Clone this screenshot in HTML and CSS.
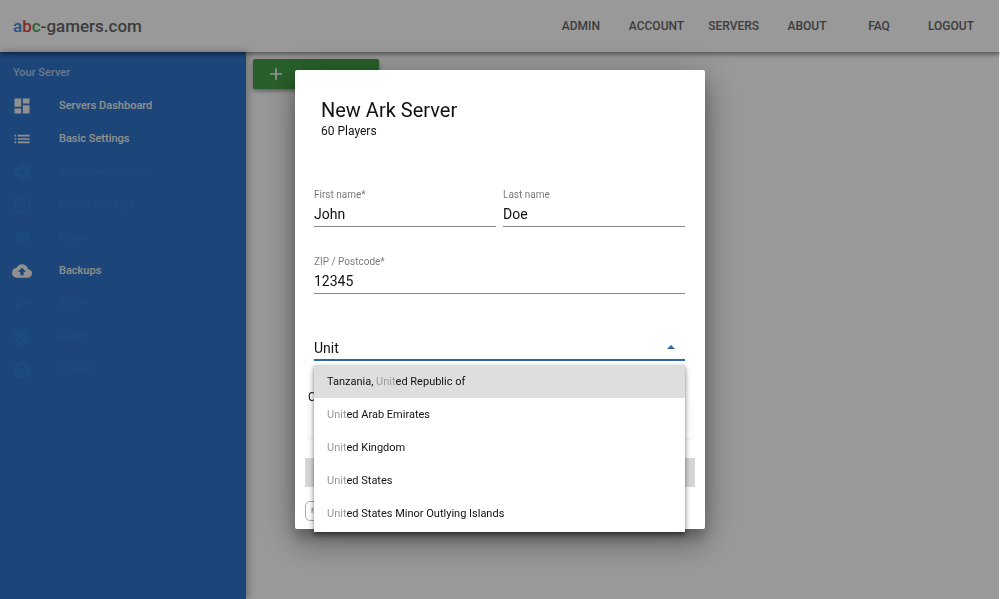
FILE: index.html
```html
<!DOCTYPE html>
<html lang="en">
<head>
    <meta charset="UTF-8">
    <meta name="viewport" content="width=device-width, initial-scale=1.0">
    <title>abc-gamers.com</title>
    <link rel="stylesheet" href="styles.css">
</head>
<body>
    <header class="toolbar">
        <a class="brand" href="#"><span class="blue">a</span><span class="red">b</span><span class="green">c</span>-gamers.com</a>
        <nav class="top-nav">
            <a href="#">ADMIN</a>
            <a href="#">ACCOUNT</a>
            <a href="#">SERVERS</a>
            <a href="#">ABOUT</a>
            <a href="#">FAQ</a>
            <a href="#">LOGOUT</a>
        </nav>
    </header>
    <div class="layout">
        <aside class="sidebar">
            <h2>Your Server</h2>
            <nav class="side-nav">
                <a href="#">
                    <svg viewBox="0 0 24 24"><path d="M3 13h8V3H3v10zm0 8h8v-6H3v6zm10 0h8V11h-8v10zm0-18v6h8V3h-8z"/></svg>
                    Servers Dashboard
                </a>
                <a href="#">
                    <svg viewBox="0 0 24 24"><path d="M3 13h2v-2H3v2zm0 4h2v-2H3v2zm0-8h2V7H3v2zm4 4h14v-2H7v2zm0 4h14v-2H7v2zM7 7v2h14V7H7z"/></svg>
                    Basic Settings
                </a>
                <a href="#" class="disabled">
                    <svg viewBox="0 0 24 24"><path d="M19.43 12.98c.04-.32.07-.64.07-.98s-.03-.66-.07-.98l2.11-1.65c.19-.15.24-.42.12-.64l-2-3.46c-.12-.22-.39-.3-.61-.22l-2.49 1c-.52-.4-1.08-.73-1.69-.98l-.38-2.65C14.46 2.18 14.25 2 14 2h-4c-.25 0-.46.18-.49.42l-.38 2.65c-.61.25-1.17.59-1.69.98l-2.49-1c-.23-.09-.49 0-.61.22l-2 3.46c-.13.22-.07.49.12.64l2.11 1.65c-.04.32-.07.65-.07.98s.03.66.07.98l-2.11 1.65c-.19.15-.24.42-.12.64l2 3.46c.12.22.39.3.61.22l2.49-1c.52.4 1.08.73 1.69.98l.38 2.65c.03.24.24.42.49.42h4c.25 0 .46-.18.49-.42l.38-2.65c.61-.25 1.17-.59 1.69-.98l2.49 1c.23.09.49 0 .61-.22l2-3.46c.12-.22.07-.49-.12-.64l-2.11-1.65zM12 15.5c-1.93 0-3.5-1.57-3.5-3.5s1.57-3.5 3.5-3.5 3.5 1.57 3.5 3.5-1.57 3.5-3.5 3.5z"/></svg>
                    Advanced Settings
                </a>
                <a href="#" class="disabled">
                    <svg viewBox="0 0 24 24"><path d="M3 5v4h2V5h4V3H5c-1.1 0-2 .9-2 2zm2 10H3v4c0 1.1.9 2 2 2h4v-2H5v-4zm14 4h-4v2h4c1.1 0 2-.9 2-2v-4h-2v4zm0-16h-4v2h4v4h2V5c0-1.1-.9-2-2-2zM3 9h2v6H3zm16 0h2v6h-2zM9 3h6v2H9zm0 16h6v2H9zM8 8h2v2H8zm6 0h2v2h-2zm-6 6h2v2H8zm6 0h2v2h-2zm-3-3h2v2h-2z"/></svg>
                    Expert Settings
                </a>
                <a href="#" class="disabled">
                    <svg viewBox="0 0 24 24"><path d="M4 5h5v4H4zm6 0h5v4h-5zm6 0h5v4h-5zM4 10h5v4H4zm6 0h5v4h-5zm6 0h5v4h-5zM4 15h5v4H4zm6 0h5v4h-5zm6 0h5v4h-5z"/></svg>
                    Mods
                </a>
                <a href="#">
                    <svg viewBox="0 0 24 24"><path d="M19.35 10.04C18.67 6.59 15.64 4 12 4 9.11 4 6.6 5.64 5.35 8.04 2.34 8.36 0 10.91 0 14c0 3.31 2.69 6 6 6h13c2.76 0 5-2.24 5-5 0-2.64-2.05-4.78-4.65-4.96zM14 13v4h-4v-4H7l5-5 5 5h-3z"/></svg>
                    Backups
                </a>
                <a href="#" class="disabled">
                    <svg viewBox="0 0 24 24"><path d="M6.99 11L3 15l3.99 4v-3H14v-2H6.99v-3zM21 9l-3.99-4v3H10v2h7.01v3L21 9z"/></svg>
                    SFTP
                </a>
                <a href="#" class="disabled">
                    <svg viewBox="0 0 24 24"><path d="M12 1L3 5v6c0 5.55 3.84 10.74 9 12 5.16-1.26 9-6.45 9-12V5l-9-4zm-2 16l-4-4 1.41-1.41L10 14.17l6.59-6.59L18 9l-8 8z"/></svg>
                    RCON
                </a>
                <a href="#" class="disabled">
                    <svg viewBox="0 0 24 24"><path fill-rule="evenodd" d="M12 2a10 10 0 1 0 0 20 10 10 0 0 0 0-20zm0 3.500a2.750 2.750 0 1 1 0 5.500 2.750 2.750 0 0 1 0-5.500zM8 12.500a2.750 2.750 0 1 1 0 5.500 2.750 2.750 0 0 1 0-5.500zm8 0a2.750 2.750 0 1 1 0 5.500 2.750 2.750 0 0 1 0-5.500z"/></svg>
                    Cluster
                </a>
            </nav>
        </aside>
        <main class="content">
            <button type="button" class="add-button">
                <svg viewBox="0 0 24 24"><path d="M19 13h-6v6h-2v-6H5v-2h6V5h2v6h6v2z"/></svg>
                ADD SERVER
            </button>
        </main>
    </div>

    <div class="backdrop"></div>
    <div class="dialog-wrap">
        <form class="dialog" role="dialog" aria-labelledby="dialog-title">
            <div class="dialog-header">
                <h1 id="dialog-title">New Ark Server</h1>
                <p>60 Players</p>
            </div>
            <div class="fields">
                <div class="field-row">
                    <div class="field">
                        <label for="first">First name*</label>
                        <input type="text" id="first" value="John">
                    </div>
                    <div class="field">
                        <label for="last">Last name</label>
                        <input type="text" id="last" value="Doe">
                    </div>
                </div>
                <div class="field">
                    <label for="zip">ZIP / Postcode*</label>
                    <input type="text" id="zip" value="12345">
                </div>
                <div class="field country">
                    <input type="text" id="country" value="Unit" role="combobox" aria-label="Country" aria-expanded="true" aria-controls="countries">
                    <span class="arrow"></span>
                    <ul class="options" id="countries" role="listbox">
                        <li role="option" aria-selected="true">Tanzania, <span>Unit</span>ed Republic of</li>
                        <li role="option"><span>Unit</span>ed Arab Emirates</li>
                        <li role="option"><span>Unit</span>ed Kingdom</li>
                        <li role="option"><span>Unit</span>ed States</li>
                        <li role="option"><span>Unit</span>ed States Minor Outlying Islands</li>
                    </ul>
                </div>
            </div>
            <div class="payment">
                <label for="card">C</label>
                <input type="text" id="card">
            </div>
            <button type="submit" class="submit" aria-label="Submit" disabled></button>
            <span class="badge">P</span>
        </form>
    </div>
</body>
</html>
```
FILE: styles.css
```css
* {
    box-sizing: border-box;
}
body {
    display: flex;
    flex-direction: column;
    min-height: 100vh;
    margin: 0;
    background-color: #fff;
    color: #111;
    font-family: Roboto, sans-serif;
    font-size: 11px;
}
a {
    color: inherit;
    text-decoration: none;
}
input,
button {
    font-family: inherit;
}

/* top bar */
.toolbar {
    display: flex;
    align-items: center;
    justify-content: space-between;
    height: 52px;
    padding: 0 13px;
    color: #666;
    font-weight: 500;
    box-shadow: 0 2px 5px rgba(0, 0, 0, 0.5);
    z-index: 1;
}
.brand {
    font-size: 17px;
}
.brand .blue {
    color: #3c8fdc;
}
.brand .red {
    color: #e0483e;
}
.brand .green {
    color: #4ca650;
}
.top-nav {
    display: flex;
    font-size: 12px;
}
.top-nav a {
    min-width: 72px;
    padding: 0 12px;
    text-align: center;
}

/* side bar */
.layout {
    display: flex;
    flex: 1;
}
.sidebar {
    width: 246px;
    background-color: #3075ca;
    color: #f0f0f0;
    font-weight: 500;
    box-shadow: 2px 0 8px rgba(0, 0, 0, 0.3);
}
.sidebar h2 {
    margin: 0;
    padding: 5px 13px 0;
    color: #b3cbea;
    font-size: 11px;
    font-weight: 500;
    line-height: 32px;
}
.side-nav a {
    display: flex;
    align-items: center;
    gap: 27px;
    height: 33px;
    padding: 0 12px;
}
.side-nav .disabled {
    color: #307fd2;
}
.side-nav svg {
    width: 20px;
    height: 20px;
    fill: currentColor;
}

/* page */
.content {
    flex: 1;
    padding: 7px;
}
.add-button {
    display: flex;
    align-items: center;
    gap: 10px;
    height: 30px;
    padding: 0 19px 0 13px;
    border: none;
    border-radius: 2px;
    background-color: #43a047;
    color: #fff;
    font-size: 11px;
    font-weight: 500;
    box-shadow: 0 2px 4px rgba(0, 0, 0, 0.4);
}
.add-button svg {
    width: 20px;
    height: 20px;
    fill: currentColor;
}

/* dialog */
.backdrop {
    position: fixed;
    inset: 0 1px 0 0;
    background-color: rgba(0, 0, 0, 0.4);
    z-index: 2;
}
.dialog-wrap {
    display: flex;
    align-items: center;
    justify-content: center;
    position: fixed;
    inset: 0;
    z-index: 3;
}
.dialog {
    width: 410px;
    padding: 27px 10px 8px;
    border-radius: 2px;
    background-color: #fff;
    box-shadow: 0 9px 12px rgba(0, 0, 0, 0.2), 0 19px 31px rgba(0, 0, 0, 0.14), 0 7px 38px rgba(0, 0, 0, 0.3);
}
.dialog-header {
    margin-bottom: 49px;
    padding: 0 16px;
}
.dialog-header h1 {
    margin: 0;
    font-size: 20px;
    font-weight: 400;
    line-height: 26px;
}
.dialog-header p {
    margin: 0;
    font-size: 12px;
    line-height: 16px;
}
.fields {
    padding: 0 10px 0 9px;
}
.field-row {
    display: flex;
    gap: 7px;
}
.field {
    flex: 1;
    margin-bottom: 28px;
}
.field label {
    display: block;
    color: rgba(0, 0, 0, 0.54);
    font-size: 10px;
    line-height: 14px;
}
.field input {
    display: block;
    width: 100%;
    height: 25px;
    padding: 0;
    border: none;
    border-bottom: 1px solid #8a8a8a;
    outline: none;
    background: none;
    color: inherit;
    font-size: 14px;
}
.country {
    position: relative;
    padding-top: 14px;
}
.country input {
    border-bottom: 2px solid #2d689f;
}
.arrow {
    position: absolute;
    right: 10px;
    bottom: 12px;
    border: 4px solid transparent;
    border-top: none;
    border-bottom-color: #2d689f;
}
.options {
    position: absolute;
    top: 100%;
    left: 0;
    right: 0;
    margin: 4px 0 0;
    padding: 0 0 2px;
    background-color: #fff;
    font-weight: 400;
    list-style: none;
    box-shadow: 0 2px 4px rgba(0, 0, 0, 0.4), 0 4px 8px rgba(0, 0, 0, 0.2);
}
.options li {
    padding: 0 13px;
    line-height: 33px;
}
.options li[aria-selected] {
    background-color: #dedede;
}
.options span {
    color: #999;
}
.payment {
    padding: 0 3px;
}
.payment label {
    display: block;
    font-size: 12px;
    line-height: 16px;
}
.payment input {
    display: block;
    width: 100%;
    height: 33px;
    border: none;
    border-radius: 3px;
    box-shadow: 0 1px 3px #e6ebf1;
}
.submit {
    display: block;
    width: 100%;
    height: 29px;
    margin: 20px 0 14px;
    border: none;
    background-color: #d6d6d6;
}
.badge {
    display: block;
    width: 97px;
    height: 20px;
    padding: 0 5px;
    border: 1px solid #aaa;
    border-radius: 5px;
    color: #777;
    font-size: 8px;
    line-height: 18px;
}
```
